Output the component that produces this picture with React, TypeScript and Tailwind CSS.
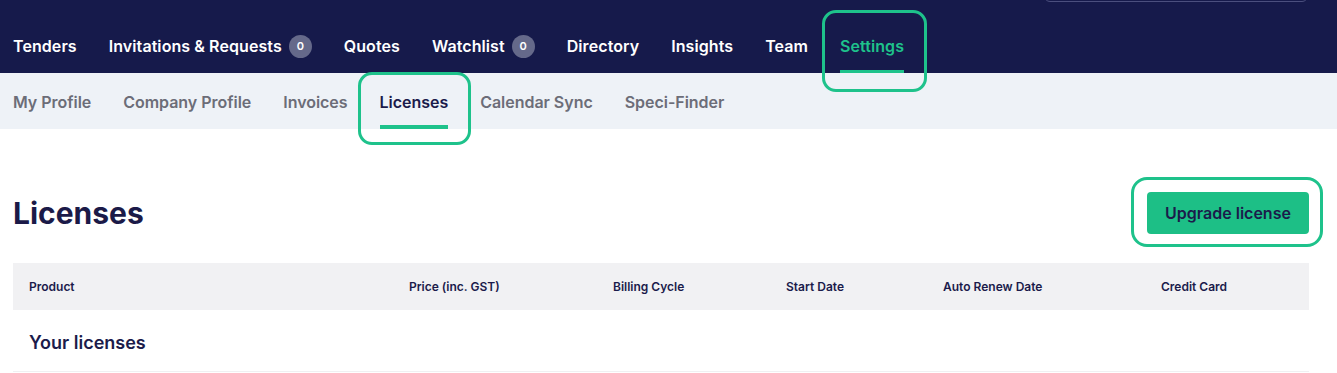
import React from 'react';

const NAV = [
  { label: 'Tenders' },
  { label: 'Invitations & Requests', badge: 0 },
  { label: 'Quotes' },
  { label: 'Watchlist', badge: 0 },
  { label: 'Directory' },
  { label: 'Insights' },
  { label: 'Team' },
  { label: 'Settings', active: true },
];

const SUBNAV = ['My Profile', 'Company Profile', 'Invoices', 'Licenses', 'Calendar Sync', 'Speci-Finder'];

const COLUMNS = ['Product', 'Price (inc. GST)', 'Billing Cycle', 'Start Date', 'Auto Renew Date', 'Credit Card'];

function Highlight({ className }: { className: string }) {
  // green annotation ring drawn over the screenshot
  return <span className={`pointer-events-none absolute rounded-[14px] border-[3px] border-[#1ec28b] ${className}`} />;
}

export default function App() {
  return (
    <div className="min-h-screen bg-white font-['Inter','Noto_Sans',sans-serif] text-[#1b1b4b]">
      {/* top nav */}
      <header className="relative h-[73px] bg-[#161a4b]">
        <div className="absolute right-[29px] top-[-40px] h-[42px] w-[264px] rounded-md border border-[#4b4f7e]" />
        <nav className="flex h-full items-stretch gap-8 pl-[13px]">
          {NAV.map((item) => (
            <div key={item.label} className="relative flex items-center pt-[19px]">
              <span
                className={`text-[16px] font-semibold tracking-[0.08px] ${
                  item.active ? 'text-[#1ec28b]' : 'text-white'
                }`}
              >
                {item.label}
              </span>
              {item.badge !== undefined && (
                <span className="ml-[7px] flex h-[23px] w-[23px] items-center justify-center rounded-full bg-[#65698a] text-[11px] font-semibold text-white">
                  {item.badge}
                </span>
              )}
              {item.active && (
                <>
                  <span className="absolute bottom-0 left-0 right-0 h-[3px] bg-[#1ec28b]" />
                  <Highlight className="-left-[18px] -right-[23px] top-[10px] -bottom-[19px] z-10" />
                </>
              )}
            </div>
          ))}
        </nav>
      </header>

      {/* sub nav */}
      <div className="flex h-[56px] items-stretch gap-8 bg-[#eef2f7] pl-[13px]">
        {SUBNAV.map((label) => {
          const active = label === 'Licenses';
          return (
            <div key={label} className="relative flex items-center pt-[2px]">
              <span
                className={`text-[16px] font-semibold tracking-[-0.03px] ${
                  active ? 'text-[#1b1b4b]' : 'text-[#6c6d78]'
                }`}
              >
                {label}
              </span>
              {active && (
                <>
                  <span className="absolute bottom-0 left-0 right-0 h-[4px] bg-[#1ec28b]" />
                  <Highlight className="-left-[22px] -right-[23px] -top-[1px] -bottom-[16px] z-10" />
                </>
              )}
            </div>
          );
        })}
      </div>

      {/* content */}
      <main className="pl-[13px] pr-[28px]">
        <div className="flex h-[134px] items-center justify-between pt-[34px]">
          <h1 className="text-[30px] font-bold text-[#1b1a48]">Licenses</h1>
          <div className="relative">
            <button
              type="button"
              className="h-[42px] w-[162px] rounded-[4px] bg-[#1dbf86] text-[16px] font-semibold text-[#1b1b4b]"
            >
              Upgrade license
            </button>
            <Highlight className="-left-[16px] -right-[14px] -top-[15px] -bottom-[13px] rounded-[16px]" />
          </div>
        </div>

        <div className="grid h-[47px] grid-cols-[380px_204px_173px_157px_218px_1fr] items-center bg-[#f1f1f3] pl-4 text-[12px] font-semibold text-[#1b1b4b]">
          {COLUMNS.map((c) => (
            <div key={c}>{c}</div>
          ))}
        </div>

        <div className="flex h-[62px] items-center border-b border-[#f0f0f2] pl-4 pt-1">
          <h2 className="text-[18px] font-semibold text-[#1b1b4b]">Your licenses</h2>
        </div>
      </main>
    </div>
  );
}
